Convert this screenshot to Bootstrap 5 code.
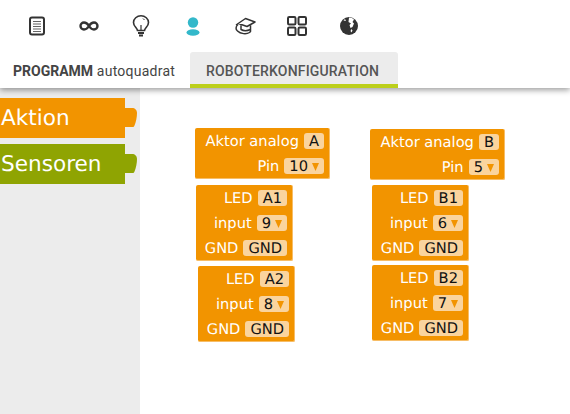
<!DOCTYPE html>
<html lang="de">
<head>
<meta charset="utf-8">
<title>Roboterkonfiguration</title>
<link rel="stylesheet" href="https://cdn.jsdelivr.net/npm/bootstrap@5.3.0/dist/css/bootstrap.min.css">
<style>
html,body{height:100%;overflow:hidden;background:#fff}
.app-shell{width:570px;height:414px}
.top-head{height:88px;position:relative;z-index:2;box-shadow:0 2px 6px rgba(0,0,0,.4);background:#fff}
.icon-row{height:52px;padding-left:11px}
.icon-cell{width:52px;height:48px;color:#333}
.icon-cell svg{display:block}
.tab-row{height:36px;font-family:Roboto,sans-serif;font-size:14px;color:#444}
.tab-prog{width:190px;padding:6px 0 0 13px;line-height:27px;letter-spacing:.25px}
.tab-prog b{font-weight:700;letter-spacing:0}
.tab-robot{width:208px;padding:6px 0 0 16px;line-height:26px;background:#ececec;border-bottom:4px solid #bccf1b;border-radius:3px 3px 0 0;font-weight:500;color:#555;letter-spacing:.17px}
.work-area{height:326px}
.tool-side{width:140px;background:#ececec;padding-top:10px;gap:6px;font-family:"DejaVu Sans",sans-serif;color:#fff;text-rendering:geometricPrecision}
.cat-item{width:125px;height:40px;font-size:21.6px;line-height:41px;position:relative;padding-left:1px}
.cat-item svg{position:absolute;left:125px;top:10px}
.cat-act{background:#f29400}
.cat-sens{background:#8fa402}
.canvas-free{position:relative;flex:1 1 auto;background:#fff}
.blk{position:absolute;background:#f29400;border-radius:2px;border-right:1px solid #f7bd66;border-bottom:1px solid #f7bd66;font-family:"DejaVu Sans",sans-serif;font-size:11pt;text-rendering:geometricPrecision;color:#fff;padding:5px 5px 0 0;box-sizing:border-box}
.blk-row{height:25px;line-height:18px;gap:5px}
.fld{height:16px;line-height:18px;background:#fad49e;border-radius:3px;color:#111;padding:0 5px;display:inline-flex;align-items:flex-start}
.fld svg{margin:5px 0 0 4px}
.blk-wide{width:135px;height:51px}
.blk-slim{width:97px;height:76px}
</style>
</head>
<body>
<div class="app-shell d-flex flex-column">
  <header class="top-head">
    <div class="icon-row d-flex align-items-center">
      <div class="icon-cell d-flex align-items-center justify-content-center">
        <svg width="18" height="20" viewBox="0 0 18 20" fill="none" stroke="#333"><rect x="2" y="1.500" width="14" height="17" rx="2" stroke-width="2"/><path d="M5 5.500h8M5 8h8M5 10.500h8M5 13h8M5 15.500h8" stroke-width="1.200" stroke="#666"/></svg>
      </div>
      <div class="icon-cell d-flex align-items-center justify-content-center">
        <svg width="20" height="10" viewBox="0 0 20 10" fill="none" stroke="#333" stroke-width="2.400"><path d="M10 5C8.500 2.500 7 1.500 5 1.500a3.500 3.500 0 0 0 0 7c2 0 3.500-1 5-3.500s3-3.500 5-3.500a3.500 3.500 0 0 1 0 7c-2 0-3.500-1-5-3.500z"/></svg>
      </div>
      <div class="icon-cell d-flex align-items-center justify-content-center">
        <svg width="18" height="23" viewBox="0 0 18 23" fill="none" stroke="#333" stroke-width="1.600"><path d="M5.500 15.500C5 12.500 1.500 11.500 1.500 7.500a7.500 6.700 0 0 1 15 0c0 4-3.500 5-4 8z"/><path d="M6 18h6M7 20.500h4" stroke-width="2"/><path d="M9 15V10" stroke-width="1.200"/><path d="M11 3.500l1.500 1.500" stroke-width="1"/></svg>
      </div>
      <div class="icon-cell d-flex align-items-center justify-content-center">
        <svg width="14" height="19" viewBox="0 0 14 19" fill="#33b8ca"><circle cx="7" cy="5.500" r="5.200"/><ellipse cx="7" cy="15.500" rx="6.500" ry="3.200"/></svg>
      </div>
      <div class="icon-cell d-flex align-items-center justify-content-center">
        <svg width="21" height="18" viewBox="0 0 21 18" fill="none" stroke="#333" stroke-width="1.500" stroke-linejoin="round"><path d="M1 8 10.500 1.500 20 5 12 9.500 3.500 6.500"/><path d="M3 7.500C.5 9.500.5 12.500 2.500 14c3 3 9 3.500 12 1.500l1-1V8.200"/><path d="M6 8.200v4.300c2.500 1.500 6 1.500 9.500 0"/></svg>
      </div>
      <div class="icon-cell d-flex align-items-center justify-content-center">
        <svg width="20" height="20" viewBox="0 0 20 20" fill="none" stroke="#333" stroke-width="2"><rect x="1" y="1" width="7.500" height="7.500" rx="1.200"/><rect x="11.500" y="1" width="7.500" height="7.500" rx="1.200"/><rect x="1" y="11.500" width="7.500" height="7.500" rx="1.200"/><rect x="11.500" y="11.500" width="7.500" height="7.500" rx="1.200"/></svg>
      </div>
      <div class="icon-cell d-flex align-items-center justify-content-center">
        <svg width="18" height="18" viewBox="0 0 18 18"><circle cx="9" cy="9" r="9" fill="#333"/><path d="M9 .5c2 0 4 .8 5 2L12.500 5 14 6.500 12.500 10 10.500 11 9.500 8 11 6.500 8.500 5z M5 2 3.500 3.500 6 4z M11.500 12l1 1.500-1 2-1-1.500z" fill="#fff"/></svg>
      </div>
    </div>
    <div class="tab-row d-flex">
      <div class="tab-prog"><b>PROGRAMM</b> autoquadrat</div>
      <div class="tab-robot">ROBOTERKONFIGURATION</div>
    </div>
  </header>
  <main class="work-area d-flex">
    <aside class="tool-side d-flex flex-column flex-shrink-0">
      <div class="cat-item cat-act">Aktion
        <svg width="12" height="20" viewBox="0 0 12 20"><path d="M0 0h7c3 0 5 2 5 5 0 4-1 9-2.500 12.500-.4 1-1 1.500-2 1.500H0z" fill="#f29400"/></svg>
      </div>
      <div class="cat-item cat-sens">Sensoren
        <svg width="12" height="20" viewBox="0 0 12 20"><path d="M0 0h7c3 0 5 2 5 5 0 4-1 9-2.500 12.500-.4 1-1 1.500-2 1.500H0z" fill="#8fa402"/></svg>
      </div>
    </aside>
    <section class="canvas-free">
      <div class="blk blk-wide" style="left:55px;top:40px">
        <div class="blk-row d-flex justify-content-end"><span>Aktor analog</span><span class="fld">A</span></div>
        <div class="blk-row d-flex justify-content-end"><span>Pin</span><span class="fld">10<svg width="7" height="8" viewBox="0 0 7 8"><path d="M0 0h7L3.500 8z" fill="#f29400"/></svg></span></div>
      </div>
      <div class="blk blk-slim" style="left:56px;top:97px">
        <div class="blk-row d-flex justify-content-end"><span>LED</span><span class="fld">A1</span></div>
        <div class="blk-row d-flex justify-content-end"><span>input</span><span class="fld">9<svg width="7" height="8" viewBox="0 0 7 8"><path d="M0 0h7L3.500 8z" fill="#f29400"/></svg></span></div>
        <div class="blk-row d-flex justify-content-end"><span>GND</span><span class="fld">GND</span></div>
      </div>
      <div class="blk blk-slim" style="left:58px;top:178px">
        <div class="blk-row d-flex justify-content-end"><span>LED</span><span class="fld">A2</span></div>
        <div class="blk-row d-flex justify-content-end"><span>input</span><span class="fld">8<svg width="7" height="8" viewBox="0 0 7 8"><path d="M0 0h7L3.500 8z" fill="#f29400"/></svg></span></div>
        <div class="blk-row d-flex justify-content-end"><span>GND</span><span class="fld">GND</span></div>
      </div>
      <div class="blk blk-wide" style="left:230px;top:41px">
        <div class="blk-row d-flex justify-content-end"><span>Aktor analog</span><span class="fld">B</span></div>
        <div class="blk-row d-flex justify-content-end"><span>Pin</span><span class="fld">5<svg width="7" height="8" viewBox="0 0 7 8"><path d="M0 0h7L3.500 8z" fill="#f29400"/></svg></span></div>
      </div>
      <div class="blk blk-slim" style="left:232px;top:97px">
        <div class="blk-row d-flex justify-content-end"><span>LED</span><span class="fld">B1</span></div>
        <div class="blk-row d-flex justify-content-end"><span>input</span><span class="fld">6<svg width="7" height="8" viewBox="0 0 7 8"><path d="M0 0h7L3.500 8z" fill="#f29400"/></svg></span></div>
        <div class="blk-row d-flex justify-content-end"><span>GND</span><span class="fld">GND</span></div>
      </div>
      <div class="blk blk-slim" style="left:232px;top:177px">
        <div class="blk-row d-flex justify-content-end"><span>LED</span><span class="fld">B2</span></div>
        <div class="blk-row d-flex justify-content-end"><span>input</span><span class="fld">7<svg width="7" height="8" viewBox="0 0 7 8"><path d="M0 0h7L3.500 8z" fill="#f29400"/></svg></span></div>
        <div class="blk-row d-flex justify-content-end"><span>GND</span><span class="fld">GND</span></div>
      </div>
    </section>
  </main>
</div>
<script src="https://cdn.jsdelivr.net/npm/bootstrap@5.3.0/dist/js/bootstrap.bundle.min.js"></script>
</body>
</html>
